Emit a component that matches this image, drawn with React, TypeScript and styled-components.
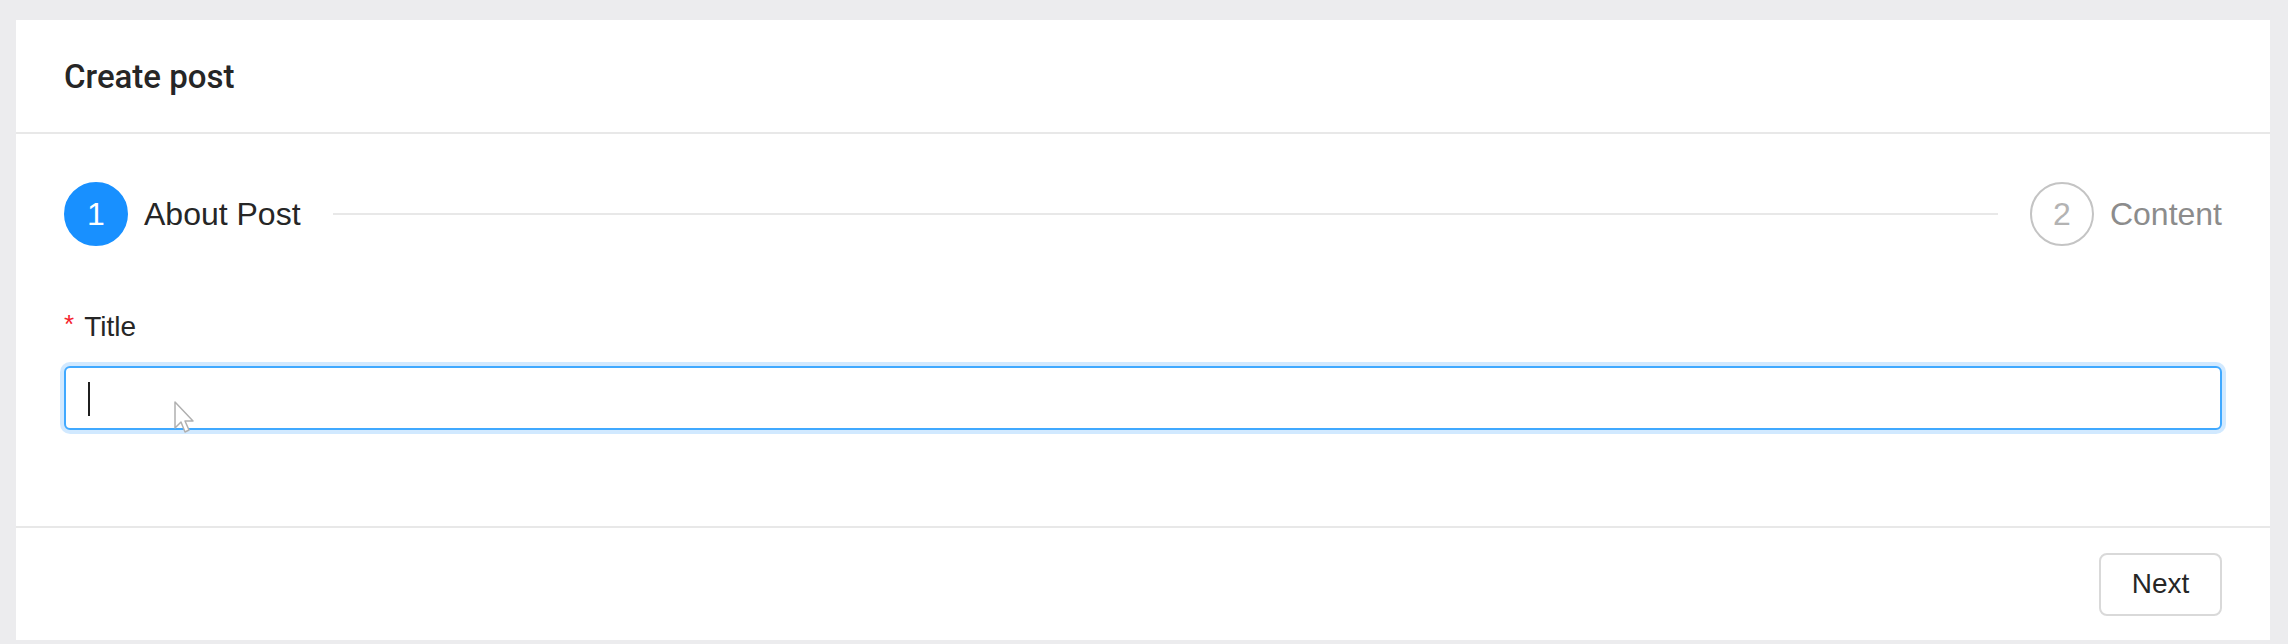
import React from "react";
import styled, { createGlobalStyle } from "styled-components";

const GlobalStyle = createGlobalStyle`
  html, body {
    margin: 0;
    padding: 0;
    background: #ececee;
    font-family: "Liberation Sans", Arial, sans-serif;
    color: #262626;
  }
  * { box-sizing: border-box; }
`;

const Page = styled.div`
  padding: 20px 18px 4px 16px;
`;

const Card = styled.div`
  background: #ffffff;
  height: 620px;
  display: flex;
  flex-direction: column;
`;

const CardHeader = styled.div`
  height: 114px;
  padding: 0 48px;
  display: flex;
  align-items: center;
  border-bottom: 2px solid #e8e8e8;
`;

const CardTitle = styled.h1`
  margin: 0;
  font-family: Roboto, "Liberation Sans", sans-serif;
  font-weight: 500;
  font-size: 33px;
  color: #262626;
`;

const CardBody = styled.div`
  padding: 48px 48px 96px;
  border-bottom: 2px solid #e8e8e8;
`;

const Steps = styled.div`
  display: flex;
  align-items: center;
  height: 64px;
  margin-bottom: 59px;
`;

const Step = styled.div`
  display: flex;
  align-items: center;
  gap: 16px;
  flex: none;
`;

const StepIcon = styled.div<{ $active?: boolean }>`
  width: 64px;
  height: 64px;
  border-radius: 50%;
  display: flex;
  align-items: center;
  justify-content: center;
  font-size: 32px;
  background: ${(p) => (p.$active ? "#1890ff" : "#ffffff")};
  border: 2px solid ${(p) => (p.$active ? "#1890ff" : "#c4c4c4")};
  color: ${(p) => (p.$active ? "#ffffff" : "#b3b3b3")};
`;

const StepTitle = styled.span<{ $active?: boolean }>`
  font-size: 32px;
  line-height: 64px;
  color: ${(p) => (p.$active ? "#262626" : "#8c8c8c")};
`;

const StepLine = styled.div`
  flex: 1;
  height: 2px;
  background: #e8e8e8;
  margin: 0 32px;
`;

const Label = styled.label`
  display: flex;
  align-items: center;
  font-size: 28px;
  line-height: 44px;
  margin-bottom: 17px;
  color: #262626;
`;

const Required = styled.span`
  color: #f5222d;
  font-size: 26px;
  margin-right: 10px;
  font-family: SimSun, "Liberation Sans", sans-serif;
  position: relative;
  top: -3px;
`;

const InputWrap = styled.div`
  position: relative;
`;

const Input = styled.input`
  display: block;
  width: 100%;
  height: 64px;
  padding: 0 22px;
  font-size: 28px;
  font-family: "Liberation Sans", Arial, sans-serif;
  border: 2px solid #40a9ff;
  border-radius: 6px;
  box-shadow: 0 0 0 4px rgba(24, 144, 255, 0.2);
  outline: none;
  background: #fff;
  caret-color: transparent;
`;

const Caret = styled.span`
  position: absolute;
  left: 24px;
  top: 16px;
  width: 2px;
  height: 34px;
  background: #1f1f1f;
`;

const Pointer = styled.svg`
  position: absolute;
  left: 109px;
  top: 34px;
  pointer-events: none;
`;

const CardFooter = styled.div`
  flex: 1;
  display: flex;
  align-items: center;
  justify-content: flex-end;
  padding: 0 48px;
`;

const Button = styled.button`
  height: 63px;
  width: 123px;
  border: 2px solid #d9d9d9;
  border-radius: 8px;
  background: #ffffff;
  font-family: "Liberation Sans", Arial, sans-serif;
  font-size: 28px;
  color: #262626;
  cursor: pointer;
`;

export default function App() {
  return (
    <>
      <GlobalStyle />
      <Page>
        <Card>
          <CardHeader>
            <CardTitle>Create post</CardTitle>
          </CardHeader>
          <CardBody>
            <Steps>
              <Step>
                <StepIcon $active>1</StepIcon>
                <StepTitle $active>About Post</StepTitle>
              </Step>
              <StepLine />
              <Step>
                <StepIcon>2</StepIcon>
                <StepTitle>Content</StepTitle>
              </Step>
            </Steps>
            <Label htmlFor="title">
              <Required>*</Required>
              Title
            </Label>
            <InputWrap>
              <Input id="title" readOnly />
              <Caret />
              <Pointer width="26" height="36" viewBox="0 0 26 36">
                <path
                  d="M2 2 L2 28 L8 22 L12 32 L16 30 L12 21 L20 21 Z"
                  fill="#ffffff"
                  stroke="#b0b0b0"
                  strokeWidth="1.5"
                  strokeLinejoin="round"
                />
              </Pointer>
            </InputWrap>
          </CardBody>
          <CardFooter>
            <Button>Next</Button>
          </CardFooter>
        </Card>
      </Page>
    </>
  );
}
